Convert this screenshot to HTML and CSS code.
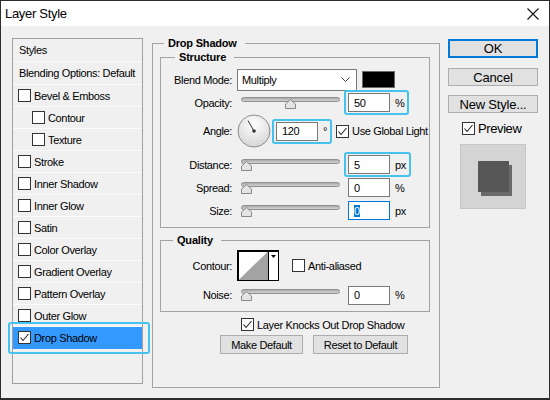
FILE: index.html
```html
<!DOCTYPE html>
<html lang="en">

<head>
    <meta charset="UTF-8">
    <meta name="viewport" content="width=device-width, initial-scale=1.0">
    <title>Layer Style</title>
    <link rel="stylesheet" href="styles.css">
</head>

<body>
    <div class='window'>
        <div class='titlebar'>
            <span>Layer Style</span>
            <svg class='close' width='12' height='12' viewBox='0 0 12 12'>
                <path d='M0.5 0.5L11.5 11.5M11.5 0.5L0.5 11.5' stroke='#111' stroke-width='1.1' fill='none' />
            </svg>
        </div>

        <div class='dialog'>
            <!-- left style list -->
            <div class='style_list'>
                <div class='item plain'>Styles</div>
                <div class='item plain'>Blending Options: Default</div>
                <div class='item'><span class='check'></span>Bevel &amp; Emboss</div>
                <div class='item sub'><span class='check'></span>Contour</div>
                <div class='item sub'><span class='check'></span>Texture</div>
                <div class='item'><span class='check'></span>Stroke</div>
                <div class='item'><span class='check'></span>Inner Shadow</div>
                <div class='item'><span class='check'></span>Inner Glow</div>
                <div class='item'><span class='check'></span>Satin</div>
                <div class='item'><span class='check'></span>Color Overlay</div>
                <div class='item'><span class='check'></span>Gradient Overlay</div>
                <div class='item'><span class='check'></span>Pattern Overlay</div>
                <div class='item'><span class='check'></span>Outer Glow</div>
                <div class='item active'>
                    <span class='check'><svg width='11' height='11' viewBox='0 0 11 11'><path d='M1.5 5.5L4 8.5L9.5 2' stroke='#222' stroke-width='1.1' fill='none' /></svg></span>Drop Shadow
                </div>
            </div>

            <!-- middle settings -->
            <fieldset class='group main'>
                <legend>Drop Shadow</legend>

                <fieldset class='group structure'>
                    <legend>Structure</legend>

                    <div class='row'>
                        <span class='lbl'>Blend Mode:</span>
                        <div class='select'>
                            <span>Multiply</span>
                            <svg width='9' height='6' viewBox='0 0 9 6'><path d='M0.5 0.5L4.5 4.5L8.5 0.5' stroke='#444' fill='none' /></svg>
                        </div>
                        <div class='swatch'></div>
                    </div>

                    <div class='row'>
                        <span class='lbl'>Opacity:</span>
                        <div class='slider'>
                            <div class='track'></div>
                            <div class='rail'><svg class='thumb' style='left:50%' width='11' height='10' viewBox='0 0 11 10'><path d='M5.5 0.5L10.5 5V9.5H0.5V5Z' fill='#e4e4e4' stroke='#888' /></svg></div>
                        </div>
                        <div class='field hl'><span class='input'>50</span><span>%</span></div>
                    </div>

                    <div class='row angle'>
                        <span class='lbl'>Angle:</span>
                        <svg class='dial' width='34' height='34' viewBox='0 0 34 34'>
                            <defs>
                                <radialGradient id='dial_fill' cx='50%' cy='30%' r='70%'>
                                    <stop offset='0' stop-color='#ffffff' />
                                    <stop offset='1' stop-color='#d6d6d6' />
                                </radialGradient>
                            </defs>
                            <circle cx='17' cy='17' r='16' fill='url(#dial_fill)' stroke='#8c8c8c' />
                            <path d='M17 17L11 6.6' stroke='#333' stroke-width='1' />
                            <circle cx='17' cy='17' r='1.8' fill='#333' />
                        </svg>
                        <div class='field hl'><span class='input'>120</span><span>&deg;</span></div>
                        <span class='check'><svg width='11' height='11' viewBox='0 0 11 11'><path d='M1.5 5.5L4 8.5L9.5 2' stroke='#222' stroke-width='1.1' fill='none' /></svg></span>
                        <span class='opt'>Use Global Light</span>
                    </div>

                    <div class='row spaced'>
                        <span class='lbl'>Distance:</span>
                        <div class='slider'>
                            <div class='track'></div>
                            <div class='rail'><svg class='thumb' style='left:0%' width='11' height='10' viewBox='0 0 11 10'><path d='M5.5 0.5L10.5 5V9.5H0.5V5Z' fill='#e4e4e4' stroke='#888' /></svg></div>
                        </div>
                        <div class='field hl'><span class='input'>5</span><span>px</span></div>
                    </div>

                    <div class='row'>
                        <span class='lbl'>Spread:</span>
                        <div class='slider'>
                            <div class='track'></div>
                            <div class='rail'><svg class='thumb' style='left:0%' width='11' height='10' viewBox='0 0 11 10'><path d='M5.5 0.5L10.5 5V9.5H0.5V5Z' fill='#e4e4e4' stroke='#888' /></svg></div>
                        </div>
                        <div class='field'><span class='input'>0</span><span>%</span></div>
                    </div>

                    <div class='row'>
                        <span class='lbl'>Size:</span>
                        <div class='slider'>
                            <div class='track'></div>
                            <div class='rail'><svg class='thumb' style='left:0%' width='11' height='10' viewBox='0 0 11 10'><path d='M5.5 0.5L10.5 5V9.5H0.5V5Z' fill='#e4e4e4' stroke='#888' /></svg></div>
                        </div>
                        <div class='field'><span class='input focus'><span class='sel'>0</span></span><span>px</span></div>
                    </div>
                </fieldset>

                <fieldset class='group quality'>
                    <legend>Quality</legend>

                    <div class='row contour'>
                        <span class='lbl'>Contour:</span>
                        <svg class='contour_box' width='42' height='31' viewBox='0 0 42 31'>
                            <rect x='0' y='0' width='42' height='31' fill='#fff' />
                            <path d='M1.5 30L31 1.5V30Z' fill='#a3a3a3' />
                            <path d='M31.5 0V31' stroke='#000' />
                            <path d='M34 5H39L36.5 8Z' fill='#000' />
                            <path d='M1 0V31M0 1H42' stroke='#000' stroke-width='2' />
                            <path d='M41.5 0V31M0 30.5H42' stroke='#000' />
                        </svg>
                        <span class='check aa'></span>
                        <span class='opt'>Anti-aliased</span>
                    </div>

                    <div class='row noise'>
                        <span class='lbl'>Noise:</span>
                        <div class='slider'>
                            <div class='track'></div>
                            <div class='rail'><svg class='thumb' style='left:0%' width='11' height='10' viewBox='0 0 11 10'><path d='M5.5 0.5L10.5 5V9.5H0.5V5Z' fill='#e4e4e4' stroke='#888' /></svg></div>
                        </div>
                        <div class='field'><span class='input'>0</span><span>%</span></div>
                    </div>
                </fieldset>

                <div class='knock'>
                    <span class='check'><svg width='11' height='11' viewBox='0 0 11 11'><path d='M1.5 5.5L4 8.5L9.5 2' stroke='#222' stroke-width='1.1' fill='none' /></svg></span>
                    <span>Layer Knocks Out Drop Shadow</span>
                </div>

                <div class='defaults'>
                    <div class='button make'>Make Default</div>
                    <div class='button reset'>Reset to Default</div>
                </div>
            </fieldset>

            <!-- right buttons -->
            <div class='side'>
                <div class='button big ok'>OK</div>
                <div class='button big'>Cancel</div>
                <div class='button big'>New Style...</div>
                <div class='preview_row'>
                    <span class='check'><svg width='11' height='11' viewBox='0 0 11 11'><path d='M1.5 5.5L4 8.5L9.5 2' stroke='#222' stroke-width='1.1' fill='none' /></svg></span>
                    <span>Preview</span>
                </div>
                <div class='preview'>
                    <div class='preview_square'></div>
                </div>
            </div>
        </div>
    </div>
</body>

</html>
```

FILE: styles.css
```css
* {
    box-sizing: border-box;
}

body {
    margin: 0;
    font-family: "Liberation Sans", Arial, sans-serif;
    font-size: 11px;
    letter-spacing: -0.35px;
    color: #000;
}

.window {
    width: 550px;
    height: 400px;
    border: 1px solid #2d2d2d;
    border-bottom-width: 2px;
    background: #f0f0f0;
    display: flex;
    flex-direction: column;
}

.titlebar {
    height: 25px;
    flex: none;
    background: #fff;
    display: flex;
    align-items: center;
    justify-content: space-between;
    padding: 0 10px 0 4px;
    font-size: 13px;
    letter-spacing: -0.3px;
}

.dialog {
    display: flex;
    align-items: flex-start;
    padding: 11px 0 0 11px;
}

/* style list */
.style_list {
    width: 131px;
    height: 346px;
    margin-top: 1px;
    border: 1px solid #a0a0a0;
}

.item {
    height: 22px;
    display: flex;
    align-items: center;
    gap: 3px;
    padding-left: 5px;
    border-bottom: 1px solid #fbfbfb;
}

.item.plain {
    height: 23px;
    padding-left: 6px;
}

.item.sub {
    padding-left: 19px;
}

.item.active {
    position: relative;
    background: #3399ff;
    border-bottom-color: #3399ff;
}

.item.active:after {
    content: '';
    position: absolute;
    left: -5px;
    right: -8px;
    top: -5px;
    bottom: -6px;
    border: 2px solid #45c3ee;
    border-radius: 3px;
}

.check {
    width: 13px;
    height: 13px;
    flex: none;
    border: 1px solid #333;
    background: #fff;
    display: flex;
    align-items: center;
    justify-content: center;
}

/* group boxes */
.group {
    margin: 0;
    padding: 0;
    min-width: 0;
    border: 1px solid #a3a3a3;
}

.group legend {
    font-weight: bold;
    letter-spacing: -0.2px;
    line-height: 12px;
    padding: 0 8px 0 4px;
}

.main {
    width: 288px;
    height: 351px;
    margin-left: 9px;
    padding: 2px 9px 0 7px;
}

.main > legend {
    margin-left: 4px;
}

.structure {
    padding: 5px 0 5px 0;
}

.structure legend {
    margin-left: 14px;
}

.quality {
    margin-top: 6px;
    padding: 4px 0 5px 0;
}

.quality legend {
    margin-left: 12px;
}

.row {
    height: 23px;
    display: flex;
    align-items: center;
}

.row.angle {
    height: 34px;
}

.row.spaced {
    margin-top: 5px;
}

.row.contour {
    height: 31px;
}

.row.noise {
    height: 22px;
    margin-top: 3px;
}

.lbl {
    width: 71px;
    margin-right: 5px;
    text-align: right;
    flex: none;
}

.select {
    width: 120px;
    height: 22px;
    background: #fff;
    border: 1px solid #7a7a7a;
    display: flex;
    align-items: center;
    justify-content: space-between;
    padding: 0 6px 0 4px;
}

.swatch {
    width: 33px;
    height: 17px;
    margin-left: 5px;
    background: #000;
    border: 1px solid #6a6a6a;
}

.slider {
    width: 99px;
    height: 14px;
    margin: 0 4px;
    padding-top: 1px;
}

.track {
    height: 5px;
    border: 1px solid #8f8f8f;
    border-radius: 3px;
    background: linear-gradient(#a9a9a9, #d4d4d4);
}

.rail {
    position: relative;
    margin: 0 5px;
}

.thumb {
    position: absolute;
    top: -3px;
    margin-left: -5.5px;
}

.field {
    display: flex;
    align-items: center;
    gap: 5px;
    padding: 1px 3px 1px 2px;
    border: 2px solid transparent;
    border-radius: 3px;
}

.field.hl {
    border-color: #45c3ee;
}

.input {
    width: 42px;
    height: 19px;
    background: #fff;
    border: 1px solid #7a7a7a;
    padding-left: 5px;
    display: flex;
    align-items: center;
}

.input.focus {
    border-color: #0078d7;
}

.sel {
    background: #0078d7;
    color: #fff;
}

.dial {
    margin-left: 0;
    flex: none;
}

.angle .field {
    margin-left: 1px;
}

.angle .check {
    margin-left: 4px;
}

.opt {
    margin-left: 3px;
}

.contour_box {
    flex: none;
}

.check.aa {
    margin-left: 13px;
}

.knock {
    display: flex;
    align-items: center;
    gap: 3px;
    margin: 6px 0 0 81px;
}

.defaults {
    display: flex;
    gap: 10px;
    margin: 4px 0 0 60px;
}

.button {
    height: 19px;
    background: #e1e1e1;
    border: 1px solid #adadad;
    display: flex;
    align-items: center;
    justify-content: center;
}

.button.make {
    width: 83px;
}

.button.reset {
    width: 95px;
}

/* right column */
.side {
    width: 90px;
    margin: 2px 0 0 8px;
    display: flex;
    flex-direction: column;
    font-size: 13px;
    letter-spacing: -0.2px;
}

.button.big {
    height: 18px;
    margin-top: 10px;
}

.button.ok {
    height: 19px;
    margin-top: 0;
    border: 2px solid #0078d7;
}

.side .button.big:nth-child(3) {
    margin-top: 9px;
}

.preview_row {
    display: flex;
    align-items: center;
    gap: 3px;
    margin-top: 8px;
    padding-left: 14px;
    letter-spacing: -0.4px;
}

.preview {
    width: 66px;
    height: 65px;
    margin: 8px 0 0 12px;
    background: #d4d4d4;
    border: 1px solid #c6c6c6;
    display: flex;
    align-items: center;
    justify-content: center;
}

.preview_square {
    width: 31px;
    height: 31px;
    background: #575757;
    box-shadow: 3px 4px 0 #6a6a6a;
}
```
